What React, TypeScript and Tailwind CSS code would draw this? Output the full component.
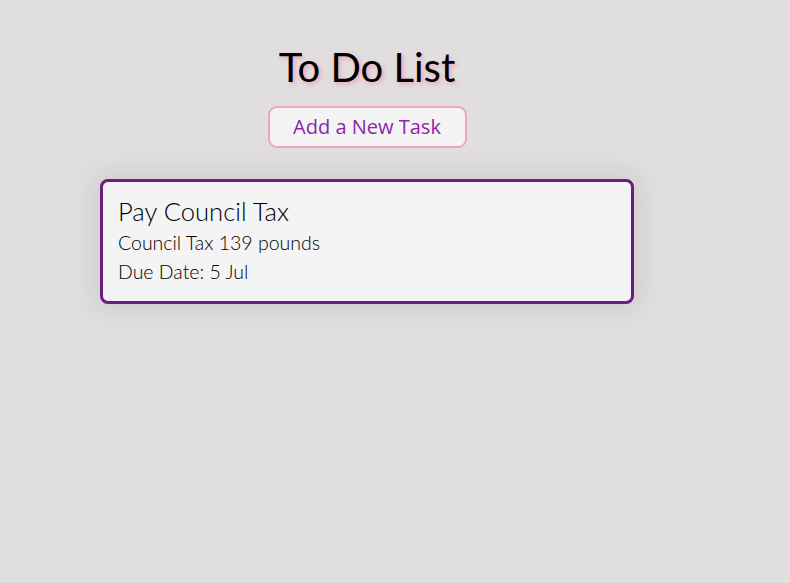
import React from "react";

// Single task card
function TaskCard({ title, description, due }: { title: string; description: string; due: string }) {
  return (
    <div className="w-full rounded-[8px] border-[3px] border-[#6b1d80] bg-[#f4f4f4] px-[15px] pt-[15px] pb-[15px] shadow-[0_0_24px_8px_rgba(0,0,0,0.07)]">
      <h2 className="text-[25.6px] leading-[29px] font-light text-black">{title}</h2>
      <p className="mt-[2px] text-[19.5px] leading-[29px] font-light text-black">{description}</p>
      <p className="text-[19.5px] leading-[29px] font-light text-black">Due Date: {due}</p>
    </div>
  );
}

export default function App() {
  return (
    <div className="min-h-[583px] bg-[#e0dedf] font-['Lato','Open_Sans',sans-serif]">
      <div className="ml-[100px] w-[534px] pt-[42px] flex flex-col items-center">
        <h1 className="text-[40px] leading-[50px] font-normal text-black [text-shadow:2px_2px_4px_#f4a0b0]">
          To Do List
        </h1>
        <button className="mt-[14px] w-[199px] h-[42px] rounded-[9px] border-2 border-[#f7a3b3] bg-[#f5f4f5] font-['Open_Sans',sans-serif] text-[20px] text-[#8e24aa]">
          Add a New Task
        </button>
        <div className="mt-[31px] w-full">
          <TaskCard title="Pay Council Tax" description="Council Tax 139 pounds" due="5 Jul" />
        </div>
      </div>
    </div>
  );
}
